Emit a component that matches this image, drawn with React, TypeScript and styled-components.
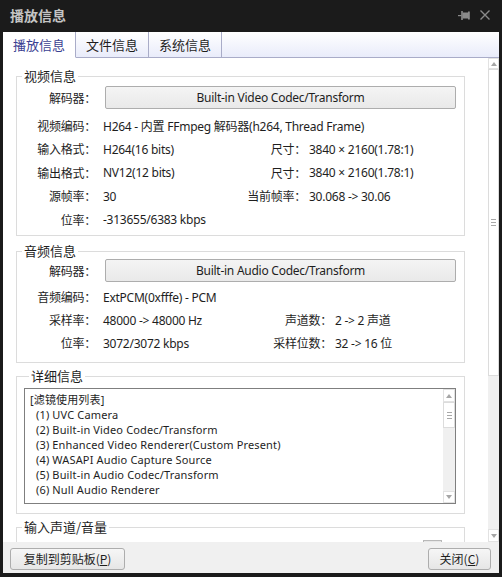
import React from 'react';
import styled, { createGlobalStyle } from 'styled-components';

const GlobalStyle = createGlobalStyle`
  html, body { margin: 0; padding: 0; background: #1b1b1b; }
  body { font-family: "Noto Sans", "Noto Sans CJK SC", sans-serif; }
`;

const Window = styled.div`
  width: 502px;
  height: 577px;
  box-sizing: border-box;
  background: #1b1b1b;
  padding: 0 3px 4px 3px;
  display: flex;
  flex-direction: column;
`;

const TitleBar = styled.div`
  height: 32px;
  flex: none;
  display: flex;
  align-items: center;
  padding: 0 9px 2px 7px;
  box-sizing: border-box;
`;

const Title = styled.div`
  flex: 1;
  font-family: "Noto Sans CJK SC", sans-serif;
  font-weight: bold;
  font-size: 14px;
  line-height: 16px;
  color: #c4c4c4;
`;

const TitleIcons = styled.div`
  display: flex;
  align-items: center;
  gap: 10px;
`;

const TabBar = styled.div`
  height: 26px;
  flex: none;
  display: flex;
  background: linear-gradient(#ffffff, #e8ebfa);
`;

const Tab = styled.div<{ $active?: boolean }>`
  width: 73px;
  box-sizing: border-box;
  display: flex;
  align-items: center;
  justify-content: center;
  font-family: "Noto Sans CJK SC", sans-serif;
  font-size: 13px;
  padding-bottom: 1px;
  border-right: 1px solid #a9acc8;
  border-bottom: 1px solid ${p => (p.$active ? '#ffffff' : '#a9acc8')};
  background: ${p => (p.$active ? '#ffffff' : 'transparent')};
  color: ${p => (p.$active ? '#3b4192' : '#1e1e1e')};
`;

const TabFiller = styled.div`
  flex: 1;
  border-bottom: 1px solid #a9acc8;
`;

const Body = styled.div`
  height: 484px;
  flex: none;
  display: flex;
  background: #ffffff;
  overflow: hidden;
`;

const Content = styled.div`
  flex: 1;
  padding: 10px 23px 0 13px;
  overflow: hidden;
  display: flex;
  flex-direction: column;
`;

const Group = styled.fieldset<{ $mt: number; $pt: number; $pb: number; $pl?: number; $pr?: number }>`
  margin: ${p => p.$mt}px 0 0 0;
  padding: ${p => p.$pt}px ${p => p.$pr ?? 8}px ${p => p.$pb}px ${p => p.$pl ?? 0}px;
  border: 1px solid #dcdcdc;
  min-width: 0;
  flex: none;
`;

const Legend = styled.legend`
  margin-left: 5px;
  padding: 0 2px;
  font-family: "Noto Sans CJK SC", sans-serif;
  font-size: 13px;
  line-height: 16px;
  color: #1e1e1e;
`;

const Row = styled.div<{ $h: number; $mid: number; $mb?: number }>`
  display: grid;
  grid-template-columns: 79px ${p => p.$mid}px 60px 1fr;
  align-items: center;
  height: ${p => p.$h}px;
  margin-bottom: ${p => p.$mb ?? 0}px;
  font-size: 12px;
  letter-spacing: -0.25px;
  color: #1e1e1e;
  white-space: nowrap;
`;

const Label = styled.div`
  text-align: right;
`;

const Value = styled.div<{ $span?: boolean; $pad?: number }>`
  padding-left: ${p => p.$pad ?? 7}px;
  ${p => (p.$span ? 'grid-column: 2 / -1;' : '')}
`;

const CodecButton = styled.div`
  grid-column: 2 / -1;
  margin-left: 9px;
  height: 23px;
  box-sizing: border-box;
  border: 1px solid #adadad;
  border-radius: 2px;
  background: linear-gradient(#f4f4f4, #e9e9e9);
  display: flex;
  align-items: center;
  justify-content: center;
  padding-bottom: 1px;
`;

const ListBox = styled.div`
  height: 116px;
  box-sizing: border-box;
  border: 1px solid #7f7f7f;
  display: flex;
  background: #ffffff;
`;

const ListText = styled.div`
  flex: 1;
  padding: 3px 0 0 5px;
  overflow: hidden;
  font-size: 11px;
  letter-spacing: 0.15px;
  line-height: 15px;
  color: #1e1e1e;
  white-space: nowrap;
`;

const ListItem = styled.div<{ $indent?: boolean }>`
  height: 15px;
  padding-left: ${p => (p.$indent ? 6 : 0)}px;
`;

const ScrollTrack = styled.div<{ $w: number; $bg: string }>`
  width: ${p => p.$w}px;
  flex: none;
  display: flex;
  flex-direction: column;
  background: ${p => p.$bg};
  box-sizing: border-box;
`;

const ScrollBtn = styled.div<{ $h: number }>`
  height: ${p => p.$h}px;
  flex: none;
  display: flex;
  align-items: center;
  justify-content: center;
  box-sizing: border-box;
  background: #ffffff;
  border: 1px solid #e2e2e2;
`;

const Thumb = styled.div<{ $h: number }>`
  height: ${p => p.$h}px;
  flex: none;
  display: flex;
  flex-direction: column;
  align-items: center;
  justify-content: center;
  gap: 2px;
  box-sizing: border-box;
  background: #ffffff;
  border: 1px solid #dcdcdc;
`;

const Grip = styled.div`
  width: 5px;
  height: 1px;
  background: #a8a8a8;
`;

const TrackFill = styled.div`
  flex: 1;
`;

const VolumeRow = styled.div`
  display: flex;
  justify-content: flex-end;
  padding: 5px 14px 0 0;
`;

const SmallControl = styled.div`
  width: 19px;
  height: 20px;
  box-sizing: border-box;
  border: 1px solid #b8b8b8;
  background: #e6e6e6;
`;

const BottomBar = styled.div`
  height: 31px;
  flex: none;
  background: #f0f0f0;
  display: flex;
  justify-content: space-between;
  align-items: flex-start;
  padding: 6px 8px 0 7px;
  box-sizing: border-box;
`;

const DialogButton = styled.div<{ $w: number }>`
  width: ${p => p.$w}px;
  height: 22px;
  box-sizing: border-box;
  border: 1px solid #adadad;
  border-radius: 3px;
  background: linear-gradient(#f6f6f6, #e6e6e6);
  display: flex;
  align-items: center;
  justify-content: center;
  font-family: "Noto Sans CJK SC", sans-serif;
  font-size: 12px;
  color: #1e1e1e;
  padding-bottom: 1px;
`;

const Arrow = ({ up }: { up: boolean }) => (
  <svg width="6" height="4" viewBox="0 0 6 4">
    <polygon points={up ? '3,0 6,4 0,4' : '0,0 6,0 3,4'} fill="#a6a6a6" />
  </svg>
);

const PinIcon = () => (
  <svg width="12" height="9" viewBox="0 0 12 9">
    <rect x="0" y="4" width="3.5" height="1.2" fill="#8a8a8a" />
    <rect x="3.2" y="0" width="1.6" height="9" fill="#8a8a8a" />
    <rect x="4.5" y="1.5" width="6" height="6" fill="#8a8a8a" />
    <rect x="10" y="0.5" width="1.8" height="8" fill="#8a8a8a" />
  </svg>
);

const CloseIcon = () => (
  <svg width="10" height="10" viewBox="0 0 10 10">
    <path d="M0.5 0.5 L9.5 9.5 M9.5 0.5 L0.5 9.5" stroke="#8a8a8a" strokeWidth="1.4" />
  </svg>
);

type R = [string, string, string?, string?];

const videoRows: R[] = [
  ['输入格式：', 'H264(16 bits)', '尺寸：', '3840 × 2160(1.78:1)'],
  ['输出格式：', 'NV12(12 bits)', '尺寸：', '3840 × 2160(1.78:1)'],
  ['源帧率：', '30', '当前帧率：', '30.068 -> 30.06'],
  ['位率：', '-313655/6383 kbps'],
];

const audioRows: R[] = [
  ['采样率：', '48000 -> 48000 Hz', '声道数：', '2 -> 2 声道'],
  ['位率：', '3072/3072 kbps', '采样位数：', '32 -> 16 位'],
];

const filters = [
  '(1) UVC Camera',
  '(2) Built-in Video Codec/Transform',
  '(3) Enhanced Video Renderer(Custom Present)',
  '(4) WASAPI Audio Capture Source',
  '(5) Built-in Audio Codec/Transform',
  '(6) Null Audio Renderer',
];

const InfoRow = ({ r, h, mid }: { r: R; h: number; mid: number }) => (
  <Row $h={h} $mid={mid}>
    <Label>{r[0]}</Label>
    <Value>{r[1]}</Value>
    {r[2] && <Label>{r[2]}</Label>}
    {r[3] && <Value $pad={3}>{r[3]}</Value>}
  </Row>
);

export default function App() {
  return (
    <>
      <GlobalStyle />
      <Window>
        <TitleBar>
          <Title>播放信息</Title>
          <TitleIcons>
            <PinIcon />
            <CloseIcon />
          </TitleIcons>
        </TitleBar>
        <TabBar>
          <Tab $active>播放信息</Tab>
          <Tab>文件信息</Tab>
          <Tab>系统信息</Tab>
          <TabFiller />
        </TabBar>
        <Body>
          <Content>
            <Group $mt={0} $pt={2} $pb={3.5}>
              <Legend>视频信息</Legend>
              <Row $h={23} $mid={150} $mb={5}>
                <Label>解码器：</Label>
                <CodecButton>Built-in Video Codec/Transform</CodecButton>
              </Row>
              <Row $h={23.5} $mid={150}>
                <Label>视频编码：</Label>
                <Value $span>H264 - 内置 FFmpeg 解码器(h264, Thread Frame)</Value>
              </Row>
              {videoRows.map((r, i) => (
                <InfoRow key={i} r={r} h={23.5} mid={150} />
              ))}
            </Group>
            <Group $mt={7} $pt={0} $pb={7.5}>
              <Legend>音频信息</Legend>
              <Row $h={23} $mid={176} $mb={3.5}>
                <Label>解码器：</Label>
                <CodecButton>Built-in Audio Codec/Transform</CodecButton>
              </Row>
              <Row $h={23} $mid={176}>
                <Label>音频编码：</Label>
                <Value $span>ExtPCM(0xfffe) - PCM</Value>
              </Row>
              {audioRows.map((r, i) => (
                <InfoRow key={i} r={r} h={23} mid={176} />
              ))}
            </Group>
            <Group $mt={5} $pt={4} $pb={9} $pl={7} $pr={8}>
              <Legend>详细信息</Legend>
              <ListBox>
                <ListText>
                  <ListItem>[滤镜使用列表]</ListItem>
                  {filters.map(f => (
                    <ListItem key={f} $indent>
                      {f}
                    </ListItem>
                  ))}
                </ListText>
                <ScrollTrack $w={12} $bg="#f0f0f0">
                  <ScrollBtn $h={13}>
                    <Arrow up />
                  </ScrollBtn>
                  <Thumb $h={26}>
                    <Grip />
                    <Grip />
                    <Grip />
                  </Thumb>
                  <TrackFill />
                  <ScrollBtn $h={12}>
                    <Arrow up={false} />
                  </ScrollBtn>
                </ScrollTrack>
              </ListBox>
            </Group>
            <Group $mt={5} $pt={0} $pb={10}>
              <Legend>输入声道/音量</Legend>
              <VolumeRow>
                <SmallControl />
              </VolumeRow>
            </Group>
          </Content>
          <ScrollTrack $w={11} $bg="#f0f0f0">
            <ScrollBtn $h={11}>
              <Arrow up />
            </ScrollBtn>
            <Thumb $h={307}>
              <Grip />
              <Grip />
              <Grip />
            </Thumb>
            <TrackFill />
            <ScrollBtn $h={13}>
              <Arrow up={false} />
            </ScrollBtn>
          </ScrollTrack>
        </Body>
        <BottomBar>
          <DialogButton $w={115}>
            复制到剪贴板(<u>P</u>)
          </DialogButton>
          <DialogButton $w={63}>
            关闭(<u>C</u>)
          </DialogButton>
        </BottomBar>
      </Window>
    </>
  );
}
